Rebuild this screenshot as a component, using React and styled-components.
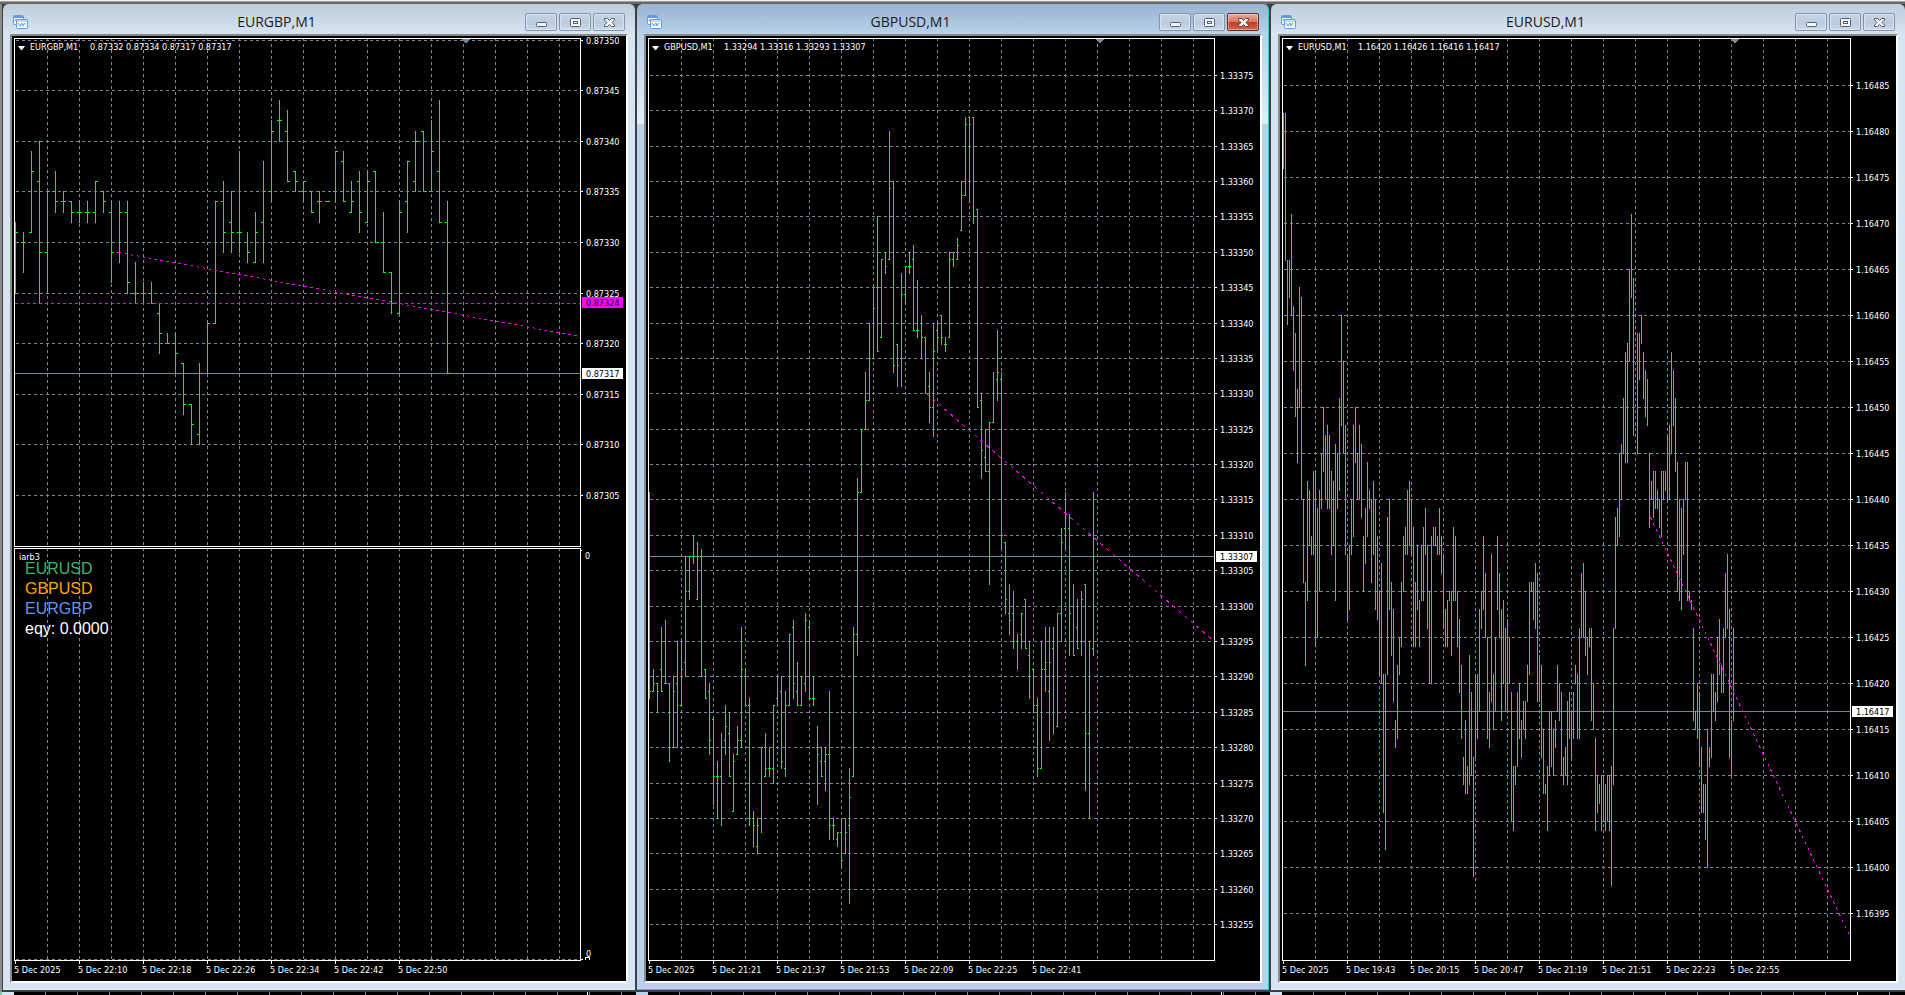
import React, { useLayoutEffect, useRef, useState } from "react";
import styled, { createGlobalStyle } from "styled-components";

// Bars are [high, low, open, close], counted in points above the base price.
const eurgbpBars = [
  [332, 325, 325, 331], [331, 327, 330, 330], [339, 331, 331, 337], [340, 324, 336, 329],
  [335, 325, 329, 335], [337, 333, 335, 334], [335, 333, 334, 334], [334, 332, 334, 333],
  [334, 332, 333, 333], [334, 332, 333, 333], [336, 332, 333, 336], [335, 333, 335, 334],
  [334, 326, 333, 329], [334, 328, 329, 333], [334, 325, 333, 326], [328, 324, 325, 325],
  [326, 324, 325, 325], [326, 324, 325, 324], [324, 319, 323, 321], [321, 320, 320, 320],
  [321, 317, 320, 319], [318, 313, 318, 314], [314, 310, 314, 312], [318, 310, 311, 317],
  [322, 317, 317, 322], [334, 322, 322, 334], [336, 329, 334, 331], [335, 329, 332, 331],
  [339, 329, 331, 331], [331, 328, 330, 329], [333, 328, 328, 331], [338, 328, 332, 335],
  [342, 334, 335, 341], [344, 340, 342, 342], [343, 336, 341, 336], [337, 335, 337, 336],
  [336, 334, 335, 336], [335, 333, 335, 333], [335, 332, 334, 334], [334, 334, 334, 334],
  [339, 334, 335, 339], [339, 334, 338, 334], [336, 333, 333, 334], [337, 331, 336, 333],
  [337, 332, 332, 336], [337, 330, 337, 330], [333, 327, 330, 327], [327, 323, 327, 324],
  [334, 323, 323, 333], [338, 331, 334, 338], [341, 335, 336, 340], [341, 335, 341, 335],
  [342, 335, 335, 339], [344, 332, 337, 332], [334, 317, 332, 317],
];

const gbpusdBars = [
  [316, 287, 288, 288], [291, 288, 288, 289], [289, 285, 289, 288], [297, 288, 291, 288],
  [298, 289, 289, 289], [289, 278, 289, 280], [290, 280, 280, 288], [295, 280, 289, 286],
  [295, 286, 286, 291], [307, 290, 292, 302], [307, 301, 302, 307], [310, 306, 307, 307],
  [309, 301, 301, 307], [308, 290, 307, 290], [291, 287, 291, 287], [289, 279, 288, 281],
  [284, 272, 284, 276], [278, 270, 276, 276], [282, 269, 276, 280], [286, 279, 281, 283],
  [285, 276, 282, 276], [279, 271, 271, 278], [283, 279, 279, 281], [297, 280, 281, 291],
  [291, 286, 290, 286], [287, 269, 286, 270], [271, 266, 270, 269], [270, 265, 266, 269],
  [280, 268, 270, 280], [282, 276, 276, 277], [280, 276, 277, 277], [286, 275, 277, 286],
  [290, 286, 287, 290], [290, 277, 288, 278], [288, 276, 277, 286], [296, 286, 286, 296],
  [298, 287, 297, 289], [292, 286, 288, 286], [290, 286, 286, 290], [299, 288, 289, 298],
  [298, 287, 297, 287], [290, 286, 287, 287], [283, 272, 280, 279], [280, 276, 278, 276],
  [280, 274, 278, 279], [288, 267, 279, 269], [270, 267, 269, 269], [268, 266, 267, 268],
  [270, 263, 268, 264], [270, 265, 265, 268], [277, 258, 269, 273], [297, 276, 276, 296],
  [318, 293, 296, 316], [325, 316, 316, 325], [333, 325, 325, 329], [340, 329, 329, 335],
  [345, 335, 335, 342], [355, 336, 345, 336], [349, 338, 338, 349], [350, 347, 350, 348],
  [367, 349, 349, 359], [360, 333, 360, 334], [337, 331, 337, 334], [347, 331, 335, 344],
  [348, 343, 344, 348], [350, 347, 348, 348], [351, 339, 349, 339], [346, 338, 339, 339],
  [341, 335, 340, 338], [338, 330, 338, 330], [333, 326, 331, 328], [340, 324, 328, 336],
  [340, 336, 339, 338], [341, 337, 341, 338], [338, 336, 337, 337], [350, 338, 338, 349],
  [350, 348, 349, 350], [352, 349, 349, 351], [360, 353, 353, 358], [369, 358, 358, 368],
  [369, 357, 369, 368], [369, 354, 369, 355], [356, 328, 356, 328], [330, 318, 329, 322],
  [325, 319, 321, 319], [326, 303, 319, 326], [333, 326, 326, 330], [339, 329, 332, 333],
  [333, 308, 332, 310], [309, 299, 309, 301], [303, 296, 299, 298], [302, 294, 299, 295],
  [296, 291, 295, 295], [299, 294, 296, 299], [301, 294, 301, 294], [295, 287, 293, 290],
  [291, 285, 291, 286], [287, 276, 286, 277], [295, 277, 277, 291], [297, 288, 291, 292],
  [297, 281, 288, 292], [297, 282, 294, 285], [299, 283, 283, 299], [311, 295, 299, 309],
  [316, 308, 311, 313], [313, 293, 311, 299], [303, 293, 300, 293], [301, 294, 297, 294],
  [302, 293, 295, 301], [303, 274, 303, 282], [295, 270, 282, 295], [316, 293, 294, 307],
];

// Too narrow for open and close ticks, so only [high, low].
const eurusdBars = [
  [482, 476], [482, 466], [466, 459], [466, 462], [471, 460], [461, 454], [458, 449], [452, 444],
  [463, 450], [462, 440], [440, 431], [431, 422], [442, 429], [441, 435], [436, 434], [443, 434],
  [443, 424], [439, 425], [441, 430], [445, 439], [450, 443], [447, 440], [448, 439], [447, 439],
  [443, 434], [442, 435], [446, 429], [445, 439], [451, 441], [460, 448], [455, 445], [448, 434],
  [434, 427], [435, 428], [440, 434], [448, 436], [450, 444], [445, 440], [448, 440], [446, 438],
  [436, 430], [439, 433], [444, 436], [441, 439], [440, 431], [442, 434], [440, 428], [436, 427],
  [430, 421], [433, 420], [421, 406], [421, 402], [438, 421], [440, 428], [431, 423], [428, 418],
  [416, 413], [422, 414], [425, 421], [431, 424], [436, 430], [437, 434], [441, 434], [442, 435],
  [440, 434], [437, 424], [431, 424], [435, 428], [429, 424], [435, 429], [437, 429], [439, 434],
  [435, 426], [430, 420], [436, 420], [437, 435], [437, 435], [436, 434], [439, 434], [436, 432],
  [434, 426], [428, 424], [429, 424], [430, 429], [430, 423], [437, 429], [436, 429], [430, 424],
  [427, 419], [422, 414], [412, 409], [416, 408], [411, 408], [423, 409], [419, 410], [412, 399],
  [421, 412], [421, 414], [428, 417], [430, 426], [436, 428], [432, 425], [425, 414], [419, 413],
  [434, 418], [421, 415], [425, 417], [436, 428], [432, 425], [428, 416], [429, 420], [426, 417],
  [427, 417], [425, 420], [419, 405], [411, 404], [411, 409], [419, 411], [420, 414], [416, 412],
  [418, 415], [418, 414], [422, 418], [431, 421], [431, 430], [431, 427], [433, 426], [432, 418],
  [423, 418], [422, 412], [415, 408], [409, 408], [411, 404], [417, 410], [417, 411], [415, 410],
  [416, 413], [422, 417], [420, 416], [419, 410], [412, 409], [413, 410], [418, 409], [419, 414],
  [417, 412], [419, 414], [422, 420], [421, 414], [426, 414], [432, 425], [433, 425], [430, 423],
  [425, 421], [426, 424], [426, 416], [420, 415], [414, 404], [410, 406], [409, 407], [410, 404],
  [410, 405], [409, 404], [410, 405], [410, 404], [411, 398], [426, 409], [438, 426], [439, 435],
  [445, 436], [446, 440], [451, 445], [456, 444], [457, 444], [465, 455], [471, 462], [464, 447],
  [448, 448], [458, 445], [458, 453], [460, 457], [456, 451], [454, 449], [453, 448], [445, 437],
  [442, 440], [443, 438], [443, 439], [441, 439], [440, 437], [443, 436], [443, 440], [443, 441],
  [447, 440], [448, 440], [456, 445], [454, 448], [451, 443], [444, 430], [440, 429], [439, 428],
  [440, 434], [444, 440], [444, 429], [430, 429], [429, 428], [426, 416], [417, 415], [420, 414],
  [419, 411], [413, 406], [409, 406], [409, 403], [415, 400], [413, 411], [421, 412], [421, 417],
  [419, 416], [425, 418], [427, 421], [422, 419], [426, 419], [432, 425], [434, 426], [428, 412],
  [416, 410], [426, 416],
];

const charts = [
  {
    symbol: "EURGBP",
    quotes: "0.87332 0.87334 0.87317 0.87317",
    prefix: "0.87",
    bars: eurgbpBars,
    step: 8,
    tick: 2,
    max: 350.2,
    span: 50.198,
    grid: [350, 305],
    bid: 317,
    level: 324,
    trend: { x: 104, from: 329, to: 320.75 },
    times: ["2025", "22:10", "22:18", "22:26", "22:34", "22:42", "22:50"],
    indicator: {
      name: "iarb3",
      rows: [
        ["EURUSD", "#3cb371"],
        ["GBPUSD", "#ffa500"],
        ["EURGBP", "#6495ed"],
        ["eqy: 0.0000", "#ffffff"],
      ],
    },
  },
  {
    symbol: "GBPUSD",
    quotes: "1.33294 1.33316 1.33293 1.33307",
    prefix: "1.33",
    bars: gbpusdBars,
    step: 4,
    tick: 1,
    max: 380.267,
    span: 130.262,
    grid: [375, 255],
    bid: 307,
    trend: { x: 278, from: 330, to: 295 },
    times: ["2025", "21:21", "21:37", "21:53", "22:09", "22:25", "22:41"],
    active: true,
  },
  {
    symbol: "EURUSD",
    quotes: "1.16420 1.16426 1.16416 1.16417",
    prefix: "1.16",
    bars: eurusdBars,
    step: 2,
    tick: 0,
    max: 490.163,
    span: 100.217,
    grid: [485, 395],
    bid: 417,
    trend: { x: 368, from: 438, to: 392.4 },
    times: ["2025", "19:43", "20:15", "20:47", "21:19", "21:51", "22:23", "22:55"],
  },
];

const LEFT = 2;
const TOP = 2;
const AXIS_WIDTH = 46;
const AXIS_HEIGHT = 21;
const GRID = 32;
const SLATE = "#778899";

const range = (from, to, step) => {
  const list = [];
  for (let n = from; step > 0 ? n <= to : n >= to; n += step) list.push(n);
  return list;
};

const useSize = () => {
  const ref = useRef(null);
  const [size, setSize] = useState({ width: 0, height: 0 });

  useLayoutEffect(() => {
    const measure = () =>
      setSize({
        width: ref.current.clientWidth,
        height: ref.current.clientHeight,
      });
    measure();
    const observer = new ResizeObserver(measure);
    observer.observe(ref.current);
    return () => observer.disconnect();
  }, []);

  return [ref, size];
};

const PriceChart = ({ chart, width, height }) => {
  const { bars, step, tick, max, span, grid, bid, level, trend, indicator } =
    chart;
  const right = width - AXIS_WIDTH;
  const bottom = height - AXIS_HEIGHT;
  const paneBottom = indicator
    ? TOP + Math.round((bottom - TOP) * 0.551)
    : bottom;
  const subTop = paneBottom + 2;
  const y = (points) =>
    TOP + Math.floor(((max - points) * (paneBottom - TOP)) / span);

  const prices = range(grid[0], grid[1], -5);
  const columns = range(LEFT + 1 + GRID, right - 1, GRID);

  const barPath = bars
    .map(([high, low, open, close], i) => {
      const x = LEFT + 1 + i * step;
      let d = `M${x} ${y(high)}h1V${y(low) + 1}h-1z`;
      if (tick) {
        if (i > 0) d += `M${x - tick} ${y(open)}h${tick}v1h-${tick}z`;
        d += `M${x + 1} ${y(close)}h${tick}v1h-${tick}z`;
      }
      return d;
    })
    .join("");

  // Dashes repeat every 6px along the longer side of the slope.
  const x1 = LEFT + trend.x;
  const y1 = y(trend.from);
  const y2 = y(trend.to);
  const major = Math.max(right - x1, Math.abs(y2 - y1));
  const unit = Math.hypot(right - x1, y2 - y1) / major;
  const dash = `${2.5 * unit} ${3.5 * unit}`;

  const marker = LEFT + Math.round((right - LEFT) * 0.8) - 2;

  return (
    <Canvas width={width} height={height} shapeRendering="crispEdges">
      <g stroke={SLATE} strokeDasharray="3 3">
        {columns.map((x) => (
          <path
            key={x}
            d={`M${x + 0.5} ${TOP}V${paneBottom}${
              indicator ? `M${x + 0.5} ${subTop}V${bottom}` : ""
            }`}
          />
        ))}
        {prices.map((p) => (
          <path key={p} d={`M${LEFT + 2} ${y(p) + 0.5}H${right}`} />
        ))}
        {indicator && <path d={`M${LEFT + 2} ${bottom - 0.5}H${right}`} />}
      </g>
      <path d={`M${LEFT} ${y(bid) + 0.5}H${right}`} stroke={SLATE} />
      <path d={barPath} fill="#00ff00" />
      {level && (
        <path
          d={`M${LEFT + 1} ${y(level) + 0.5}H${right}`}
          stroke="#ff00ff"
          strokeDasharray="3 3"
        />
      )}
      <path
        d={`M${x1 + 0.5} ${y1 + 0.5}L${right + 0.5} ${y2 + 0.5}`}
        stroke="#ff00ff"
        strokeDasharray={dash}
      />
      <path d={`M${marker - 4} ${TOP + 1}h9l-4 4h-1z`} fill={SLATE} />

      <g fill="none" stroke="#ffffff">
        <rect
          x={LEFT + 0.5}
          y={TOP + 0.5}
          width={right - LEFT}
          height={paneBottom - TOP}
        />
        {indicator && (
          <rect
            x={LEFT + 0.5}
            y={subTop + 0.5}
            width={right - LEFT}
            height={bottom - subTop}
          />
        )}
        {prices.map((p) => (
          <path key={p} d={`M${right + 1} ${y(p) + 0.5}h2`} />
        ))}
        {chart.times.map((time, i) => (
          <path key={time} d={`M${LEFT + 1.5 + i * 64} ${bottom + 1}v3`} />
        ))}
      </g>

      {prices.map((p) => (
        <text key={p} x={right + 6} y={y(p) + 4}>
          {chart.prefix + p}
        </text>
      ))}
      {level && (
        <>
          <rect
            x={right + 2}
            y={y(level) - 6}
            width="41"
            height="11"
            fill="#ff00ff"
          />
          <text x={right + 6} y={y(level) + 3} fill="#000000">
            {chart.prefix + level}
          </text>
        </>
      )}
      <rect
        x={right + 2}
        y={y(bid) - 5}
        width="41"
        height="11"
        fill="#ffffff"
      />
      <text x={right + 6} y={y(bid) + 4} fill="#000000">
        {chart.prefix + bid}
      </text>
      {chart.times.map((time, i) => (
        <text key={time} x={LEFT + i * 64} y={bottom + 13}>
          5 Dec {time}
        </text>
      ))}
      {indicator && (
        <>
          <path d={`M${right + 1} ${subTop + 2.5}h1`} stroke="#ffffff" />
          <text x={right + 5} y={subTop + 11}>
            0
          </text>
          <text x={right + 6} y={bottom - 3}>
            0
          </text>
          <path
            d={`M${right + 5.5} ${bottom}v-2l1-1h2l1 1v2M${right + 1} ${bottom - 0.5}h2`}
            fill="none"
            stroke="#ffffff"
          />
        </>
      )}
    </Canvas>
  );
};

const ChartIcon = () => (
  <svg width="15" height="15" viewBox="0 0 15 15" aria-hidden="true">
    <rect x="0.5" y="0.5" width="10" height="9" rx="1" fill="#f4f9ff" stroke="#5b9bea" />
    <path d="M1 2h9" stroke="#5b9bea" strokeWidth="2" />
    <path d="M2 6l1-2 1 2 1-1" fill="none" stroke="#5b9bea" />
    <rect x="3.5" y="4.5" width="11" height="9" rx="1" fill="#f4f9ff" stroke="#5b9bea" />
    <path d="M4 6h10" stroke="#8fbdf3" />
    <path d="M5 8l2 3 2-3 1 3 2-3" fill="none" stroke="#5b9bea" />
  </svg>
);

const glyphs = {
  Minimize: <rect x="1.5" y="5.5" width="10" height="4" rx="1" />,
  Restore: (
    <>
      <rect x="1.5" y="1.5" width="10" height="8" rx="1" />
      <rect x="4.5" y="4.5" width="4" height="2" />
    </>
  ),
  Close: (
    <path d="M1.5 1.5h3l2 2 2-2h3v1.500l-2.500 2.500 2.500 2.500v1.500h-3l-2-2-2 2h-3v-1.500l2.500-2.500-2.500-2.500z" />
  ),
};

const ChartWindow = ({ chart }) => {
  const [ref, size] = useSize();
  const { symbol, quotes, indicator, active } = chart;

  return (
    <Window $active={active}>
      <TitleBar>
        <ChartIcon />
        <Title>{symbol},M1</Title>
        <Controls>
          {Object.keys(glyphs).map((name) => (
            <ControlButton
              key={name}
              type="button"
              aria-label={`${name} ${symbol}`}
              $danger={active && name === "Close"}
            >
              <svg
                width="13"
                height="11"
                fill="#f3f6fa"
                stroke={active && name === "Close" ? "#6b3a3a" : "#565d6b"}
                aria-hidden="true"
              >
                {glyphs[name]}
              </svg>
            </ControlButton>
          ))}
        </Controls>
      </TitleBar>
      <Client>
        <Plot ref={ref}>
          {size.width > 0 && (
            <PriceChart chart={chart} width={size.width} height={size.height} />
          )}
          <QuoteLine type="button">
            <svg width="7" height="4" fill="#ffffff" aria-hidden="true">
              <path d="M0 0h7L4 4H3z" />
            </svg>
            <QuoteSymbol>{symbol},M1</QuoteSymbol>
            <span>{quotes}</span>
          </QuoteLine>
          {indicator && (
            <Indicator>
              <IndicatorName>{indicator.name}</IndicatorName>
              {indicator.rows.map(([text, color]) => (
                <IndicatorRow key={text} $color={color}>
                  {text}
                </IndicatorRow>
              ))}
            </Indicator>
          )}
        </Plot>
      </Client>
    </Window>
  );
};

const App = () => (
  <>
    <GlobalStyle />
    <Desktop>
      <TopEdge />
      <Windows>
        {charts.map((chart) => (
          <ChartWindow key={chart.symbol} chart={chart} />
        ))}
      </Windows>
      <Behind>
        {charts.map((chart) => (
          <BehindWindow key={chart.symbol} $active={chart.active} />
        ))}
      </Behind>
    </Desktop>
  </>
);

const GlobalStyle = createGlobalStyle`
  body {
    margin: 0;
    background: #000000;
    overflow: hidden;
  }

  * {
    box-sizing: border-box;
  }
`;

const Desktop = styled.main`
  display: flex;
  flex-direction: column;
  height: 100vh;
  background: #4a4a4a;
`;

const TopEdge = styled.div`
  flex: none;
  height: 4px;
  background: linear-gradient(#f0f0f0 1px, #a0a0a0 1px 2px, #696969 2px);
`;

/* The last window runs one pixel past the right edge of the workspace. */
const Windows = styled.div`
  flex: 1;
  min-height: 0;
  display: grid;
  grid-template-columns: 634fr 634fr 636fr;
  margin-right: -1px;
  padding-left: 2px;
  background: linear-gradient(90deg, #8c8c8c 2px, #3c3c3c 2px);
`;

const Window = styled.section`
  display: flex;
  flex-direction: column;
  min-width: 0;
  padding: 0 7px 7px;
  border: solid #3f3f3f;
  border-width: 0 1px 2px;
  border-radius: 6px 6px 0 0;
  background: ${({ $active }) =>
    $active
      ? "linear-gradient(#99b4d1, #b9d1ea 30px, #e3eef9 120px, #b9d1ea 120px)"
      : "linear-gradient(#bfcddb, #d7e4f2 30px)"};
  box-shadow: ${({ $active }) =>
    $active ? "inset -1px -1px #35c5e0" : "inset 0 -1px #e8eef2"};
`;

const TitleBar = styled.header`
  flex: none;
  display: flex;
  align-items: center;
  height: 30px;
  padding: 6px 3px 0;
`;

const Title = styled.h1`
  flex: 1;
  margin: 0;
  color: #1a1a1a;
  font: 400 14px/20px "Open Sans", "Noto Sans", sans-serif;
  text-align: center;
`;

const Controls = styled.div`
  display: flex;
  gap: 2px;
`;

const ControlButton = styled.button`
  display: flex;
  align-items: center;
  justify-content: center;
  width: 32px;
  height: 18px;
  padding: 0;
  border: 1px solid ${({ $danger }) => ($danger ? "#5f2a2e" : "#8293ab")};
  border-radius: 2px;
  background: ${({ $danger }) =>
    $danger
      ? "linear-gradient(#e6a99a, #d67765 8px, #bf3a22 8px, #d4694c)"
      : "linear-gradient(#c6d5e6, #bccde0 8px, #b9cbde 8px, #cbd9e9)"};
  box-shadow: inset 0 0 0 1px rgba(255, 255, 255, 0.4);
`;

const Client = styled.div`
  flex: 1;
  min-height: 0;
  display: flex;
  border: 2px solid;
  border-color: #8a8a8a #ffffff #ffffff #8a8a8a;
`;

const Plot = styled.div`
  position: relative;
  flex: 1;
  min-width: 0;
  overflow: hidden;
  background: #000000;
  color: #ffffff;
  font: 9px/11px "DejaVu Sans Condensed", "Noto Sans", sans-serif;
`;

const Canvas = styled.svg`
  display: block;
  fill: #ffffff;
`;

const QuoteLine = styled.button`
  position: absolute;
  top: 6px;
  left: 6px;
  display: flex;
  align-items: center;
  gap: 5px;
  padding: 0;
  border: 0;
  background: none;
  color: inherit;
  font: inherit;
`;

const QuoteSymbol = styled.span`
  min-width: 55px;
  text-align: left;
`;

const Indicator = styled.div`
  position: absolute;
  top: 54%;
  left: 7px;
`;

const IndicatorName = styled.div`
  padding-top: 7px;
  height: 13px;
  line-height: 8px;
`;

const IndicatorRow = styled.div`
  padding-left: 6px;
  color: ${({ $color }) => $color};
  font: 16px/20px "Liberation Sans", Arial, sans-serif;
`;

const Behind = styled.div`
  flex: none;
  display: grid;
  grid-template-columns: 634fr 634fr 636fr;
  height: 3px;
  margin-right: -1px;
  padding-left: 2px;
  background: #7ecba8;
`;

const BehindWindow = styled.div`
  border-left: 12px solid ${({ $active }) => ($active ? "#b9d1ea" : "#d7e4f2")};
  background:
    linear-gradient(#ffffff, #ffffff) right 48px top / 1px 3px no-repeat,
    repeating-linear-gradient(
      90deg,
      #000000 0 31px,
      #778899 31px 32px
    );
`;

export default App;
